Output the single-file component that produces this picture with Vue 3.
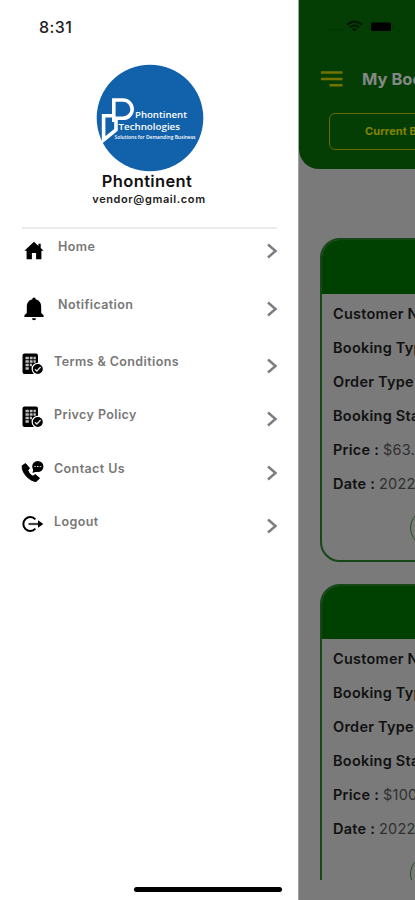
<script setup>
const menu = [
  { label: 'Home', icon: 'home', tall: true },
  { label: 'Notification', icon: 'bell', tall: true },
  { label: 'Terms & Conditions', icon: 'doc' },
  { label: 'Privcy Policy', icon: 'doc' },
  { label: 'Contact Us', icon: 'phone' },
  { label: 'Logout', icon: 'logout' },
]
const bookings = [
  { price: '$63.00', date: '2022-08-12' },
  { price: '$100.00', date: '2022-08-12' },
]
</script>

<template>
  <div class="screen">
    <aside class="drawer">
      <div class="clock">8:31</div>
      <div class="profile">
        <svg class="avatar" width="108" height="108" viewBox="0 0 108 108">
          <circle cx="54" cy="54" r="53.3" fill="#1261ab" />
          <path d="M17.800 58V36H27A8.800 8.800 0 0 1 27 54.300H20V66L7.600 76V51.800H17.800" fill="none" stroke="#fff" stroke-width="3.600" />
          <text x="39" y="53.800" font-size="9.500" textLength="52" lengthAdjust="spacingAndGlyphs" class="brand">Phontinent</text>
          <text x="22.500" y="65.500" font-size="9.500" textLength="61.500" lengthAdjust="spacingAndGlyphs" class="brand">Technologies</text>
          <text x="18.500" y="75" font-size="5.500" textLength="81" lengthAdjust="spacingAndGlyphs" class="brand">Solutions for Demanding Business</text>
        </svg>
        <div class="name">Phontinent</div>
        <div class="email">vendor@gmail.com</div>
      </div>
      <nav class="menu">
        <div v-for="item in menu" :key="item.label" class="item" :class="{ tall: item.tall }">
          <svg v-if="item.icon === 'home'" class="icon" viewBox="0 0 24 24">
            <path d="M12 2.800 2.400 11.800H4.600V20.200H9.900V14.100H14.100V20.200H19.400V11.800H21.600L18.700 9V4.800H16.400V6.900Z" />
          </svg>
          <svg v-else-if="item.icon === 'bell'" class="icon" viewBox="0 0 24 24">
            <path d="M12 .5a1.700 1.700 0 0 0-1.700 1.700C6.700 3 4.800 6 4.800 9.500V16L2.400 18.300V20H21.600V18.300L19.200 16V9.500C19.200 6 17.300 3 13.700 2.200A1.700 1.700 0 0 0 12 .5ZM10 21.200a2 2 0 0 0 4 0Z" />
          </svg>
          <svg v-else-if="item.icon === 'doc'" class="icon" viewBox="0 0 24 24">
            <rect x="2.500" y="1.500" width="15.500" height="20.500" rx="2" />
            <path d="M5.500 6H8.800M9.800 6H12.600M13.500 6H15.800M5.500 9.500H8.800M9.800 9.500H12.600M13.500 9.500H15.800M5.500 13H8.800M9.800 13H12M5.500 16.500H8.800" stroke="#bdbdbd" stroke-width="2.600" />
            <circle cx="17.800" cy="17" r="5.600" stroke="#fff" stroke-width="1.200" />
            <path d="m14.900 17.200 2 1.800 3.700-4" fill="none" stroke="#ddd" stroke-width="1.300" />
          </svg>
          <svg v-else-if="item.icon === 'phone'" class="icon" viewBox="0 0 24 24">
            <path d="M5.500 4.600 2.200 6.700C1.500 13.500 9 22 16 22.500L19.600 19.200 15.300 15.600 12.900 17.200C10.500 16 8.600 13.700 7.800 11.300L9.500 9.200Z" stroke="#000" stroke-linejoin="round" />
            <circle cx="17.800" cy="7.500" r="5.600" />
            <path d="m12.500 14 1-4.500 3.500 3Z" />
            <path d="M14.300 7.500h1.500m1.200 0h1.500m1.200 0h1.500" stroke="#ccc" stroke-width="1.200" />
          </svg>
          <svg v-else class="icon" viewBox="0 0 24 24">
            <path d="M15.400 7.400A6.900 6.900 0 1 0 15.400 16.600" fill="none" stroke="#000" stroke-width="2" />
            <path d="M8.500 12H19" stroke="#444" stroke-width="2.200" />
            <path d="M18 8.300 23.300 12 18 15.700Z" />
          </svg>
          <span class="label">{{ item.label }}</span>
          <svg class="chevron" width="12" height="16" viewBox="0 0 12 16">
            <path d="m2 1.500 7.500 6.500L2 14.500" fill="none" stroke="#7c7d82" stroke-width="2.500" />
          </svg>
        </div>
      </nav>
      <div class="home-bar"></div>
    </aside>

    <main class="page">
      <header class="top">
        <div class="status">
          <svg width="76" height="16" viewBox="0 0 76 16">
            <path d="M5 10.500h17" stroke="#033303" stroke-dasharray="3 1.500" />
            <path d="M26 5.700q7.500-6.200 15 0M28.800 8.300q4.700-3.500 9.400 0" fill="none" stroke="#001900" stroke-width="2" />
            <path d="m30.900 10 2.600 2.600L36.100 10q-2.600-1.700-5.200 0Z" fill="#001500" />
            <rect x="50" y="3.500" width="20" height="8.500" rx="1.500" fill="#000" />
            <path d="M72.500 6v3.500" stroke="#022c02" />
          </svg>
        </div>
        <div class="title-row">
          <svg width="24" height="18" viewBox="0 0 24 18">
            <path d="M1 2.500h21.500M1 9h21.500M9.500 15.200h13" stroke="#737300" stroke-width="2.500" />
          </svg>
          <h1>My Bookings</h1>
        </div>
        <div class="tab">Current Bookings</div>
      </header>
      <section class="cards">
        <article v-for="b in bookings" :key="b.price" class="card">
          <div class="card-head"></div>
          <div class="fields">
            <p>Customer Name :</p>
            <p>Booking Type :</p>
            <p>Order Type :</p>
            <p>Booking Status :</p>
            <p>Price : <span>{{ b.price }}</span></p>
            <p>Date : <span>{{ b.date }}</span></p>
          </div>
          <div class="action"></div>
        </article>
      </section>
    </main>
  </div>
</template>

<style>
body {
  margin: 0;
  overflow: hidden;
}
</style>

<style scoped>
* {
  box-sizing: border-box;
}
.screen {
  display: flex;
  width: 415px;
  height: 900px;
  overflow: hidden;
  background: #7a7a7a;
  font-family: Inter, 'Liberation Sans', sans-serif;
}
.drawer {
  display: flex;
  flex-direction: column;
  flex: 0 0 299px;
  background: #fff;
  border-right: 1px solid #a2a2a2;
}
.clock {
  height: 64px;
  padding: 17px 0 0 39px;
  font-size: 16px;
  line-height: 20px;
  font-weight: 500;
  letter-spacing: 0.4px;
  color: #222;
}
.profile {
  display: flex;
  flex-direction: column;
  align-items: center;
  height: 165px;
  margin: 0 21px 0 22px;
  border-bottom: 2px solid #ebebeb;
}
.avatar {
  flex: none;
}
.brand {
  fill: #fff;
  font-family: 'Open Sans', sans-serif;
  font-weight: 600;
}
.name {
  margin-top: -1px;
  padding-right: 5px;
  font-size: 16.5px;
  line-height: 20px;
  font-weight: 600;
  letter-spacing: 0.35px;
  color: #111;
}
.email {
  margin-top: 1px;
  padding-right: 1px;
  font-size: 11px;
  line-height: 14px;
  font-weight: 600;
  letter-spacing: 0.6px;
  color: #222;
}
.menu {
  flex: 1;
}
.item {
  display: flex;
  align-items: flex-start;
  height: 53.3px;
  padding: 0 20px 0 20px;
}
.item.tall {
  height: 57.5px;
  padding-left: 22px;
}
.icon {
  flex: none;
  width: 24px;
  height: 24px;
  margin-top: 8px;
}
.tall .icon {
  margin-top: 10px;
}
.label {
  flex: 1;
  margin: 10px 0 0 10px;
  font-size: 12.5px;
  line-height: 16px;
  font-weight: 600;
  letter-spacing: 0.4px;
  color: #777;
}
.tall .label {
  margin-left: 12px;
}
.chevron {
  margin-top: 14px;
}
.home-bar {
  width: 148px;
  height: 5px;
  margin: 0 0 8px 134px;
  border-radius: 3px;
  background: #000;
}
.page {
  flex: 1;
  min-width: 0;
  height: 880px;
  overflow: hidden;
  white-space: nowrap;
}
.top {
  height: 169px;
  padding-top: 19px;
  border-bottom-left-radius: 20px;
  background: #043e04;
}
.status {
  height: 50px;
  padding-left: 22px;
}
.title-row {
  display: flex;
  align-items: center;
  gap: 18px;
  height: 20px;
  padding-left: 21px;
}
.title-row svg {
  flex: none;
}
h1 {
  margin: 0;
  font-size: 16.5px;
  font-weight: 700;
  color: #858985;
}
.tab {
  width: 190px;
  height: 37px;
  margin: 24px 0 0 30px;
  padding-left: 35px;
  border: 1.5px solid #676b00;
  border-radius: 6px;
  font-size: 11px;
  line-height: 35px;
  font-weight: 700;
  letter-spacing: 0.1px;
  color: #858500;
}
.cards {
  display: flex;
  flex-direction: column;
  gap: 22px;
  padding: 69px 0 0 21px;
}
.card {
  flex: none;
  width: 350px;
  height: 323.5px;
  overflow: hidden;
  border: 2px solid #174717;
  border-radius: 20px;
}
.card-head {
  height: 53.5px;
  background: #004000;
}
.fields {
  padding: 3px 0 0 11px;
}
p {
  margin: 0;
  font-size: 14.5px;
  line-height: 34.1px;
  font-weight: 600;
  letter-spacing: 0.25px;
  color: #111;
}
p span {
  font-weight: 400;
  color: #303030;
}
.action {
  width: 160px;
  height: 36px;
  margin: 9px 0 0 88px;
  border: 1px solid #205020;
  border-radius: 18px;
}
</style>
